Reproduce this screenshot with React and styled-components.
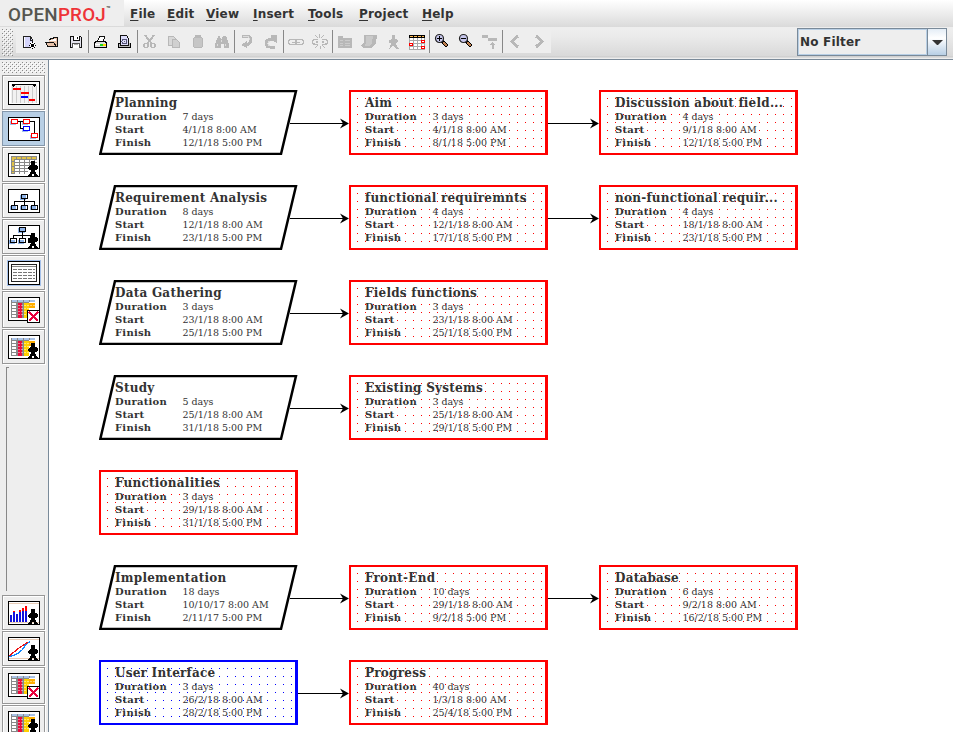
import React from 'react';
import styled, { createGlobalStyle, css } from 'styled-components';

const Global = createGlobalStyle`
  * { box-sizing: border-box; }
  body { margin: 0; background: #fff; overflow: hidden; }
`;

const bumps = css`
  background-image:
    conic-gradient(from 270deg at 1px 1px, #8a8a8a 90deg, transparent 0),
    conic-gradient(from 270deg at 1px 1px, #8a8a8a 90deg, transparent 0),
    conic-gradient(from 270deg at 1px 1px, #fff 90deg, transparent 0),
    conic-gradient(from 270deg at 1px 1px, #fff 90deg, transparent 0);
  background-size: 4px 4px;
  background-position: 0 0, 2px 2px, 1px 1px, 3px 3px;
`;

const Window = styled.div`
  width: 953px;
  height: 732px;
  display: flex;
  flex-direction: column;
  overflow: hidden;
  background: #eee;
  color: #333;
  font-family: "DejaVu Sans", sans-serif;
`;

const MenuBar = styled.header`
  display: flex;
  flex: none;
  height: 27px;
  background: linear-gradient(#fff, #dadada);
`;

const Logo = styled.div`
  width: 124px;
  height: 26px;
  padding-left: 8px;
  background: #eee;
  display: flex;
  font: 500 18.8px/30px Roboto, sans-serif;
  color: #55554f;
  letter-spacing: 0.25px;
`;
const LogoAccent = styled.span`color: #ee3338;`;
const Trademark = styled.span`
  font-size: 7px;
  font-weight: bold;
  line-height: 19px;
`;

const Menus = styled.nav`
  display: flex;
  gap: 12px;
  padding-left: 6px;
`;
const Menu = styled.span`
  width: ${(p) => p.$w}px;
  font-weight: bold;
  font-size: 12px;
  line-height: 29px;
  letter-spacing: 0.2px;
  white-space: nowrap;
`;
const Mnemonic = styled.span`
  text-decoration: underline;
  text-decoration-thickness: 1px;
  text-underline-offset: 2px;
  text-decoration-skip-ink: none;
`;

const ToolStrip = styled.div`
  display: flex;
  flex: none;
  height: 33px;
  border-bottom: 1px solid #7a8a99;
  background: linear-gradient(#eee 0 2px, #eaeaea 10px, #d9d9d9 29px, #c8c8c8 30px, #eee 31px);
`;
const Grip = styled.div`
  width: 11px;
  height: 27px;
  margin: 2px 3px 0 2px;
  ${bumps}
`;
const Tools = styled.div`
  display: flex;
  width: 535px;
  height: 23px;
  margin-top: 3px;
  background: #eee;
`;
const Tool = styled.button`
  width: 24px;
  height: 23px;
  padding: 0 4px 3px;
  border: 0;
  background: none;
  svg { display: block; overflow: visible; }
`;
const Divider = styled.i`
  width: 1px;
  background: #888;
`;
const Combo = styled.div`
  display: flex;
  width: 150px;
  height: 28px;
  margin: 1px 6px 0 auto;
  border: 1px solid #7a8a99;
`;
const ComboValue = styled.div`
  flex: 1;
  border: 1px solid #b8cfe5;
  padding-left: 1px;
  background: #eee;
  font: bold 12px/25px "DejaVu Sans", sans-serif;
  letter-spacing: 0.2px;
`;
const ComboButton = styled.div`
  width: 19px;
  border-left: 1px solid #7a8a99;
  background: linear-gradient(#e4edf6, #fff 35%, #b8cfe5);
  display: flex;
  align-items: center;
  justify-content: center;
`;

const Body = styled.div`
  display: flex;
  flex: 1;
  min-height: 0;
`;
const Sidebar = styled.aside`
  width: 48px;
  padding: 2px 0 0 2px;
  flex: none;
  overflow: hidden;
`;
const SideGrip = styled.div`
  width: 43px;
  height: 11px;
  margin-bottom: 2px;
  ${bumps}
`;
const ViewButton = styled.button`
  display: block;
  width: 43px;
  height: ${(p) => (p.$tall ? 37 : 35)}px;
  margin: 0 0 1px;
  padding: 5px 5px 4px;
  border: 1px solid ${(p) => (p.$active ? '#8497ab' : '#979797')};
  box-shadow: inset 1px 1px ${(p) => (p.$active ? '#b8cfe5' : '#fff')}, 1px 1px #fff;
  background: ${(p) => (p.$active ? '#b8cfe5' : '#eee')};
  svg { display: block; overflow: visible; }
`;
const SideGap = styled.div`
  height: 224px;
  margin: 3px 0 4px 4px;
  width: 3px;
  border-left: 1px solid #888;
  border-top: 1px solid #888;
`;

const Canvas = styled.main`
  flex: 1;
  background: #fff;
  border-left: 1px solid #7a8a99;
  padding: 30px 0 0 50px;
  overflow: hidden;
`;
const TaskRow = styled.div`
  display: flex;
  height: 65px;
  margin-bottom: 30px;
`;
const dotColor = { red: '#f00', blue: '#00f' };
const Task = styled.article`
  position: relative;
  width: 199px;
  height: 65px;
  flex: none;
  padding: ${(p) => (p.$tone ? '4px 0 0 14px' : '6px 0 0 16px')};
  ${(p) => p.$tone && css`
    border: 2px solid ${dotColor[p.$tone]};
    border-right-width: 3px;
  `}
`;
const Dots = styled.div`
  position: absolute;
  left: 6px;
  top: 6px;
  width: 185px;
  height: 49px;
  background: conic-gradient(from 270deg at 1px 1px, ${(p) => dotColor[p.$tone]} 90deg, transparent 0) 0 0 / 8px 8px;
`;
const Outline = styled.svg`
  position: absolute;
  left: 0;
  top: 0;
`;
const TaskText = styled.div`
  position: relative;
  font-family: "DejaVu Serif", serif;
  color: #333;
  white-space: nowrap;
`;
const Title = styled.div`
  font-weight: bold;
  font-size: 12px;
  line-height: 15px;
  height: 14px;
  letter-spacing: 0.24px;
`;
const Field = styled.div`
  display: flex;
  height: 13px;
  font-size: 9.5px;
  line-height: 13px;
  letter-spacing: -0.03px;
`;
const Label = styled.span`
  width: 67.5px;
  font-weight: bold;
  font-size: 10px;
  letter-spacing: 0.25px;
`;
const Link = styled.svg`
  flex: none;
  overflow: visible;
`;

/* ---------- toolbar icons, 16 x 20 ---------- */
const G = '#b8b8b8';
const Icon = ({ children }) => (
  <svg width="16" height="20" viewBox="0 0 16 20" shapeRendering="crispEdges" fill="none">{children}</svg>
);

const lens = (minus) => (
  <Icon>
    <path d="M8 11l5.500 5.500" stroke="#000" strokeWidth="3.500" />
    <path d="M9.500 12.500l3.500 3.500" stroke="#c08050" strokeWidth="1.500" />
    <circle cx="5.500" cy="8.500" r="4" fill="#c6c6ec" stroke="#222" strokeWidth="1.200" shapeRendering="auto" />
    <path d="M3 8.500h5" stroke="#000" />
    {!minus && <path d="M5.500 6v5" stroke="#000" />}
  </Icon>
);

const icons = {
  new: (
    <Icon>
      <path d="M3.500 6.500h7l2 3v8h-9z" fill="#d4d4fa" stroke="#222" />
      <path d="M10 6v4h3" stroke="#222" />
      <path d="M4 7h1v10h-1z" fill="#fff" />
      <path d="M10 12h5v6h-5z" fill="#fff" />
      <path d="M12.500 12v8M9 15.500h7" stroke="#000" strokeDasharray="1 1" />
      <path d="M10 13h1v1h-1zM14 13h1v1h-1zM11 14h1v1h-1zM13 14h1v1h-1zM11 16h1v1h-1zM13 16h1v1h-1zM10 17h1v1h-1zM14 17h1v1h-1zM12 15h1v1h-1z" fill="#000" />
    </Icon>
  ),
  open: (
    <Icon>
      <path d="M5 9l6-2h3v10H4l-2-4h3z" fill="#e9c3aa" />
      <path d="M1.500 12.500h8l3 4H4zM5 9.500l6-2h2.500v9" stroke="#111" />
      <path d="M6 10l6-1v2H6z" fill="#fff" />
    </Icon>
  ),
  save: (
    <Icon>
      <path d="M2.500 6.500h10l1 1v10h-11z" fill="#e4e4ee" stroke="#111" />
      <path d="M5.500 6v4.500h6v-4.500" fill="#fff" stroke="#111" />
      <path d="M9 7h1v2h-1z" fill="#111" />
      <path d="M4.500 18v-5h7v5" fill="#fff" stroke="#555" />
      <path d="M6 14.500h4" stroke="#aaa" />
    </Icon>
  ),
  print: (
    <Icon>
      <path d="M4.500 11.500l2-5h5l-1 5" fill="#fff" stroke="#111" />
      <path d="M2.500 11.500h10l1 2v4h-12v-4z" fill="#ddd" stroke="#000" />
      <path d="M2 14h6v1h-6z" fill="#fff" /><path d="M7 14h3v2h-3z" fill="#1bd51b" /><path d="M10 14h3v2h-3z" fill="#ffd800" />
    </Icon>
  ),
  preview: (
    <Icon>
      <path d="M2.500 13h-1v4.500h12v-4.500h-1" fill="#bbb" stroke="#000" />
      <path d="M3.500 15.500v-10h6l2 3v7z" fill="#dcdcfa" stroke="#111" />
      <circle cx="7.500" cy="11.500" r="2.500" stroke="#555577" /><path d="M7 11h1v1h-1z" fill="#667" />
    </Icon>
  ),
  cut: (
    <Icon>
      <path d="M3 5l7 9M12 5l-7 9" stroke={G} strokeWidth="2" />
      <circle cx="4" cy="15.500" r="2" stroke={G} strokeWidth="1.500" /><circle cx="11" cy="15.500" r="2" stroke={G} strokeWidth="1.500" />
    </Icon>
  ),
  copy: (
    <Icon>
      <path d="M2.500 6.500h5l2 2v7h-7z" fill="#d8d8d8" stroke={G} />
      <path d="M6.500 9.500h4l3 3v5h-7z" fill="#d0d0d0" stroke={G} />
    </Icon>
  ),
  paste: (
    <Icon>
      <path d="M6 7V5.500h4v2" stroke={G} strokeWidth="2" />
      <path d="M3.500 8.500l1-1h7l1 1v8l-1 1h-7l-1-1z" fill="#c6c6c6" stroke={G} />
    </Icon>
  ),
  find: (
    <Icon>
      <path d="M4 6h2l1 3h1l1-3h2l2 2 2 6v4h-5v-4h-3v4h-6v-4l3-7z" fill={G} />
      <path d="M3 14h1v2h-1zM11 14h1v2h-1zM7 10h1v2h-1z" fill="#ddd" />
    </Icon>
  ),
  undo: (
    <Icon>
      <path d="M3 6.500h5c5 0 5 5 2 7l-3 2" stroke={G} strokeWidth="3" />
      <path d="M2 15l6-4v7z" fill={G} /><path d="M4 6.500h5l2 3" stroke="#ddd" />
    </Icon>
  ),
  redo: (
    <Icon>
      <path d="M12 17H7c-5 0-5-6-1-7.500h4" stroke={G} strokeWidth="3" />
      <path d="M8 5l6 0v8l-6-3z" fill={G} /><path d="M7 16c-3-1-3-4 0-5" stroke="#ddd" />
    </Icon>
  ),
  link: (
    <Icon>
      <rect x=".5" y="9.500" width="8" height="5" rx="2.500" stroke={G} strokeWidth="1.500" />
      <rect x="7.500" y="9.500" width="8" height="5" rx="2.500" stroke={G} strokeWidth="1.500" />
      <path d="M4 12.500h8" stroke={G} />
    </Icon>
  ),
  unlink: (
    <Icon>
      <path d="M6 9.500H3l-2.500 1v3l2.500 1h3M10 9.500h3l2.500 1v3l-2.500 1h-3M4 12h2M10 12h2" stroke={G} strokeWidth="1.500" />
      <path d="M7 4l1 4M3 5l3 3M12 5l-3 3M8 16v3M6 15l-3 3M10 15l3 3" stroke={G} />
    </Icon>
  ),
  info: (
    <Icon>
      <path d="M1 6h5v2h9v10H1z" fill={G} />
      <path d="M3 10.500h3M8 10.500h5M3 13.500h3M8 13.500h5M3 15.500h3M8 15.500h5" stroke="#ccc" />
    </Icon>
  ),
  note: (
    <Icon>
      <path d="M3 5h13l-1 8-4 5H2l-2-3 3-2z" fill={G} />
      <path d="M5 6h7l-1 7-3 3H4l1-4z" fill="#c9c9c9" />
    </Icon>
  ),
  person: (
    <Icon>
      <path d="M7 5h3v4h2l1 2-1 2h-1l1 4 2 2h-3l-3-4-3 4H3l2-2 1-4H4v-3l3-1z" fill={G} />
    </Icon>
  ),
  table: (
    <Icon>
      <path d="M0 8h16v11h-16z" fill="#fff" />
      <path d="M.5 8v12M4.500 8v12M8.500 8v12M12.500 8v12M15.500 8v12M0 10.500h16M0 13.500h16M0 16.500h16M0 19.500h16" stroke="#aaa" />
      <path d="M0 5h16v3h-16z" fill="#000" /><path d="M1 6.500h14" stroke="#fb5" strokeDasharray="3 1" />
      <path d="M12.500 10.500h3v2h-3zM.5 13.500h3v2h-3zM12.500 16.500h3v2h-3z" fill="#fff" stroke="#f00" />
    </Icon>
  ),
  zoomIn: lens(false),
  zoomOut: lens(true),
  promote: (
    <Icon>
      <path d="M0 5h6v3h-6zM6 8h9v3h-9z" fill={G} />
      <path d="M10.500 19v-5" stroke={G} strokeWidth="2" /><path d="M7 15l3.500-3 3.500 3z" fill={G} />
    </Icon>
  ),
  prev: <Icon><path d="M11 6l-6 5.500 6 5.500" stroke={G} strokeWidth="3" /></Icon>,
  next: <Icon><path d="M5 6l6 5.500-6 5.500" stroke={G} strokeWidth="3" /></Icon>,
};

const toolGroups = [
  ['new', 'open', 'save'],
  ['print', 'preview'],
  ['cut', 'copy', 'paste', 'find'],
  ['undo', 'redo'],
  ['link', 'unlink'],
  ['info', 'note', 'person', 'table'],
  ['zoomIn', 'zoomOut', 'promote'],
  ['prev', 'next'],
];

/* ---------- view icons, 32 x 24 ---------- */
const Person = () => (
  <path d="M23 8h4v4h1l2 2v2l-2 1h-1l1 4 2 1v2h-4v-3h-2v3h-4v-2l2-1 1-4h-1l-2-1v-2l2-2h1z" fill="#000" />
);
const View = ({ h = 24, children }) => (
  <svg width="32" height={h} viewBox={`0 0 32 ${h}`} fill="none" shapeRendering="crispEdges">
    <path d="M.5.500h31v23h-31z" fill="#fff" stroke="#000" />
    {children}
  </svg>
);
const Frame = () => <path d="M.5.500h31v23h-31z" stroke="#000" />;

const TreeLines = ({ small }) => (
  <>
    <path d={small ? 'M10 3h7v5h-7zM1 15h6v4h-6zM10 15h6v4h-6z' : 'M12 6h6v5h-6zM2 17h6v4h-6zM12 17h6v4h-6zM22 17h6v4h-6z'} fill="#8fb4e8" />
    {small
      ? <path d="M11.500 2.500h6v4h-6zM14.500 7v7M5.500 13v-3h17v3M2.500 13.500h6v4h-6zM11.500 13.500h6v4h-6zM20.500 13.500h5v4h-5z" stroke="#000" />
      : <path d="M13.500 5.500h6v4h-6zM16.500 10v6M6.500 16v-4h20v4M3.500 16.500h6v4h-6zM13.500 16.500h6v4h-6zM23.500 16.500h6v4h-6z" stroke="#000" />}
  </>
);
const UsageGrid = () => (
  <>
    <path d="M3 3h24v2h-24z" fill="#888" /><path d="M4 4h23" stroke="#a9c2e6" strokeDasharray="5 1" strokeWidth="1.500" />
    <path d="M3 5h18v16h-18z" fill="#888" />
    <path d="M10 6h4v15h-4z" fill="#eb0a3c" />
    <path d="M16 6h5v15h-5z" fill="#ffd000" />
    <path d="M21 6h6v5h-6z" fill="#ffae00" />
    <path d="M6 6v15" stroke="#fff" strokeWidth="4" strokeDasharray="2 1" />
    <path d="M10 8.500h17M10 11.500h11M10 14.500h11M10 17.500h11" stroke="#fff" strokeOpacity=".45" strokeDasharray="2 1" />
  </>
);
const CrossBox = () => (
  <>
    <path d="M19.500 13.500h12v12h-12z" fill="#fff" stroke="#000" />
    <path d="M21 15l9 9M30 15l-9 9" stroke="#e8003c" strokeWidth="1.800" />
  </>
);

const views = {
  gantt: (
    <View>
      <path d="M3 3h26v19h-26z" fill="#f2f2f2" />
      <path d="M4.500 5v17M8.500 5v17M12.500 5v17M16.500 5v17M20.500 5v17M24.500 5v17M28.500 5v17" stroke="#ccc" />
      <path d="M4 3.500h24" stroke="#000" />
      <path d="M4 4h3v1h-1v1h-1v-1h-1zM25 4h3v1h-1v1h-1v-1h-1z" fill="#000" />
      <path d="M5 7h8v2h-8zM13 11h8v2h-8zM21 18h6v2h-6z" fill="#f00" /><path d="M13 15h7v2h-7z" fill="#00f" />
    </View>
  ),
  network: (
    <View>
      <path d="M2 4h6v4h-6zM14 4h6v4h-6zM14 11h6v4h-6zM22 18h6v4h-6z" fill="#a4c0ea" />
      <path d="M9 4.500h6M21 4.500h5.500v12M12.500 4v7.500h3" stroke="#000" />
      <path d="M3.500 2.500h6v4h-6zM15.500 2.500h6v4h-6zM23.500 16.500h6v4h-6z" fill="#fff" stroke="#f00" />
      <path d="M15.500 9.500h6v4h-6z" fill="#fff" stroke="#00f" />
    </View>
  ),
  resources: (
    <View>
      <path d="M3 3h26v18h-26z" fill="#888" />
      <path d="M4 4.500h24M5 4v16" stroke="#e1c247" strokeWidth="2" strokeDasharray="4 1" />
      <path d="M7 8h22M7 11h22M7 14h22M7 17h22M7 20h22" stroke="#fff" strokeWidth="2" strokeDasharray="4 1" />
      <path d="M20 16h9v5h-9z" fill="#fff" />
      <Person />
    </View>
  ),
  wbs: <View><TreeLines /></View>,
  rbs: <View><TreeLines small /><Person /></View>,
  report: (
    <View>
      <path d="M-.5-.5h33v25h-33z" stroke="#a4c0ea" />
      <path d="M3.500 3.500h25v17h-25z" stroke="#222" />
      <path d="M4 5.500h24" stroke="#888" />
      <path d="M5 8.500h22M5 11.500h22M5 14.500h22M5 17.500h22" stroke="#777" strokeDasharray="4 1" />
    </View>
  ),
  taskUsage: <View h={26}><UsageGrid /><CrossBox /></View>,
  resourceUsage: <View><UsageGrid /><Person /></View>,
  histogram: (
    <View>
      <path d="M1 2h30M1 21.500h30" stroke="#e9cdb8" />
      <path d="M2 14h2v7h-2zM5 10h2v11h-2zM8 13h2v8h-2zM11 11h2v10h-2zM14 9h2v12h-2zM17 8h2v13h-2z" fill="#11d" />
      <path d="M5 10h2v1h-2zM11 9h2v2h-2zM14 7h2v3h-2zM17 5h2v5h-2z" fill="#f00" />
      <Person /><Frame />
    </View>
  ),
  curve: (
    <View>
      <path d="M1 2h30M1 21.500h30" stroke="#e9cdb8" />
      <path d="M1 20C11 16 9 18 14 13s3-8 8-8" stroke="#18f" strokeWidth="1.300" />
      <path d="M1 19L11 11l9-6" stroke="#e11" strokeWidth="1.300" />
      <Person /><Frame />
    </View>
  ),
};

const Box = ({ tone, title, values }) => (
  <Task $tone={tone}>
    {tone ? <Dots $tone={tone} /> : (
      <Outline width="199" height="65">
        <path d="M1.300 64L16 1H197L182 64z" fill="#fff" stroke="#000" strokeWidth="2.500" />
      </Outline>
    )}
    <TaskText>
      <Title>{title}</Title>
      {['Duration', 'Start', 'Finish'].map((name, i) => (
        <Field key={name}><Label>{name}</Label>{values[i]}</Field>
      ))}
    </TaskText>
  </Task>
);

const Arrow = ({ slanted }) => (
  <Link width="51" height="65">
    <path d={`M${slanted ? -8 : 0} 33.500H46`} stroke="#000" shapeRendering="crispEdges" />
    <path d="M42 28.500L51 33.500L42 38.500L45 33.500z" fill="#000" />
  </Link>
);

const rows = [
  [[null, 'Planning', '7 days', '4/1/18 8:00 AM', '12/1/18 5:00 PM'], ['red', 'Aim', '3 days', '4/1/18 8:00 AM', '8/1/18 5:00 PM'], ['red', 'Discussion about field...', '4 days', '9/1/18 8:00 AM', '12/1/18 5:00 PM']],
  [[null, 'Requirement Analysis', '8 days', '12/1/18 8:00 AM', '23/1/18 5:00 PM'], ['red', 'functional requiremnts', '4 days', '12/1/18 8:00 AM', '17/1/18 5:00 PM'], ['red', 'non-functional requir...', '4 days', '18/1/18 8:00 AM', '23/1/18 5:00 PM']],
  [[null, 'Data Gathering', '3 days', '23/1/18 8:00 AM', '25/1/18 5:00 PM'], ['red', 'Fields functions', '3 days', '23/1/18 8:00 AM', '25/1/18 5:00 PM']],
  [[null, 'Study', '5 days', '25/1/18 8:00 AM', '31/1/18 5:00 PM'], ['red', 'Existing Systems', '3 days', '25/1/18 8:00 AM', '29/1/18 5:00 PM']],
  [['red', 'Functionalities', '3 days', '29/1/18 8:00 AM', '31/1/18 5:00 PM']],
  [[null, 'Implementation', '18 days', '10/10/17 8:00 AM', '2/11/17 5:00 PM'], ['red', 'Front-End', '10 days', '29/1/18 8:00 AM', '9/2/18 5:00 PM'], ['red', 'Database', '6 days', '9/2/18 8:00 AM', '16/2/18 5:00 PM']],
  [['blue', 'User Interface', '3 days', '26/2/18 8:00 AM', '28/2/18 5:00 PM'], ['red', 'Progress', '40 days', '1/3/18 8:00 AM', '25/4/18 5:00 PM']],
];

const menus = [['File', 25], ['Edit', 27], ['View', 35], ['Insert', 43], ['Tools', 39], ['Project', 51], ['Help', 32]];

export default function App() {
  return (
    <Window>
      <Global />
      <MenuBar>
        <Logo>OPEN<LogoAccent>PROJ</LogoAccent><Trademark>™</Trademark></Logo>
        <Menus>
          {menus.map(([m, w]) => <Menu key={m} $w={w}><Mnemonic>{m[0]}</Mnemonic>{m.slice(1)}</Menu>)}
        </Menus>
      </MenuBar>
      <ToolStrip>
        <Grip />
        <Tools>
          {toolGroups.map((group, i) => (
            <React.Fragment key={group[0]}>
              {i > 0 && <Divider />}
              {group.map((name) => <Tool key={name}>{icons[name]}</Tool>)}
            </React.Fragment>
          ))}
        </Tools>
        <Combo>
          <ComboValue>No Filter</ComboValue>
          <ComboButton><svg width="11" height="5"><path d="M0 0h11L5.500 5.500z" fill="#333" /></svg></ComboButton>
        </Combo>
      </ToolStrip>
      <Body>
        <Sidebar>
          <SideGrip />
          <ViewButton>{views.gantt}</ViewButton>
          <ViewButton $active>{views.network}</ViewButton>
          <ViewButton>{views.resources}</ViewButton>
          <ViewButton>{views.wbs}</ViewButton>
          <ViewButton>{views.rbs}</ViewButton>
          <ViewButton>{views.report}</ViewButton>
          <ViewButton $tall>{views.taskUsage}</ViewButton>
          <ViewButton>{views.resourceUsage}</ViewButton>
          <SideGap />
          <ViewButton>{views.histogram}</ViewButton>
          <ViewButton>{views.curve}</ViewButton>
          <ViewButton $tall>{views.taskUsage}</ViewButton>
          <ViewButton>{views.resourceUsage}</ViewButton>
        </Sidebar>
        <Canvas>
          {rows.map((tasks, r) => (
            <TaskRow key={r}>
              {tasks.map(([tone, title, ...values], i) => (
                <React.Fragment key={title}>
                  {i > 0 && <Arrow slanted={!tasks[i - 1][0]} />}
                  <Box tone={tone} title={title} values={values} />
                </React.Fragment>
              ))}
            </TaskRow>
          ))}
        </Canvas>
      </Body>
    </Window>
  );
}
